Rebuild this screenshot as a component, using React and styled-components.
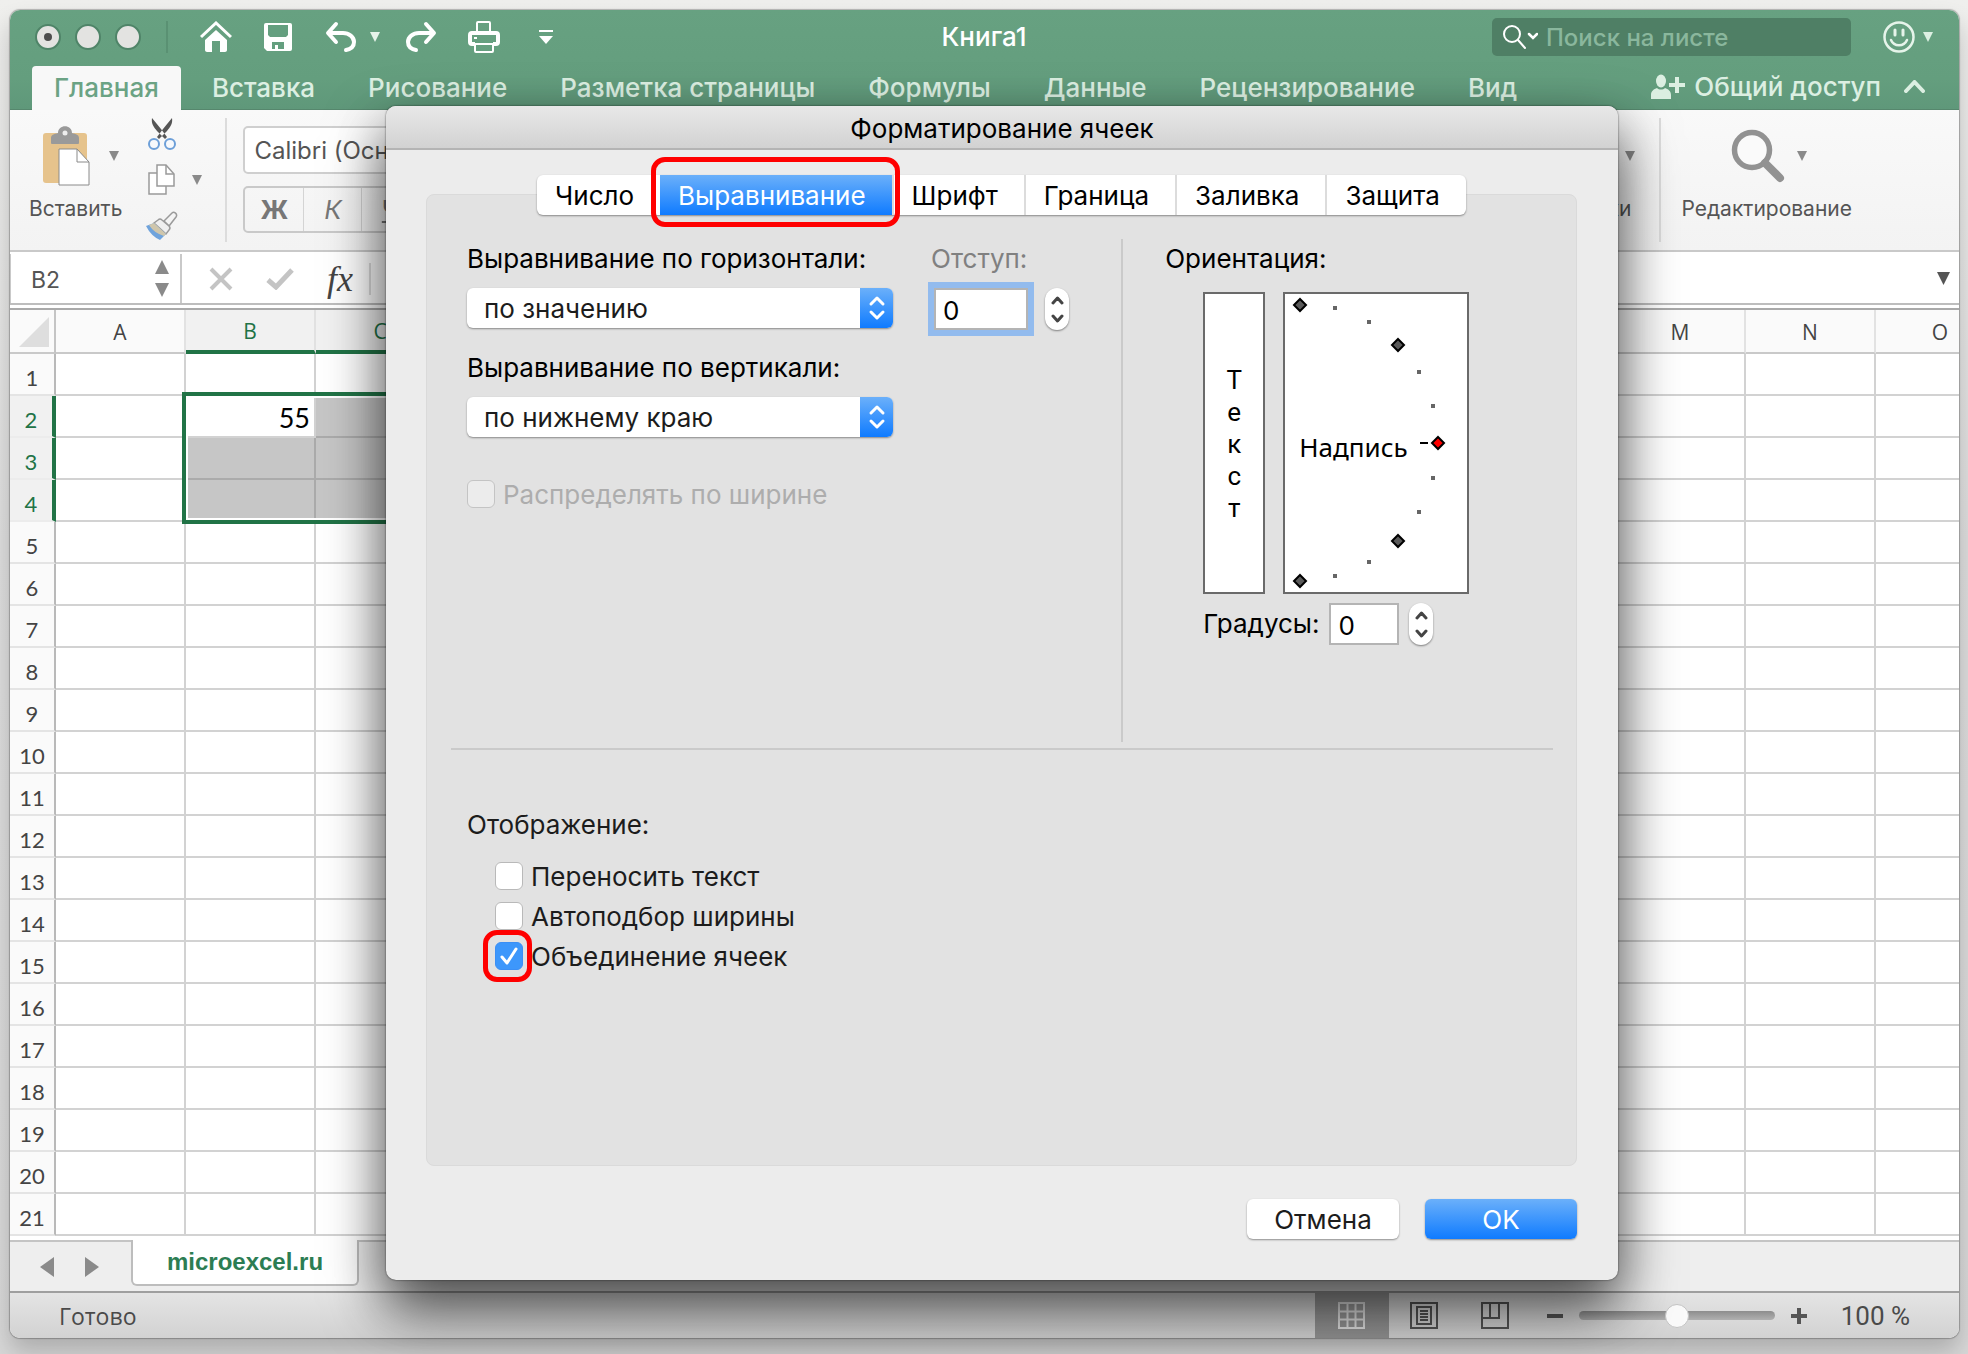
import React, { useState } from 'react';
import styled, { createGlobalStyle, css } from 'styled-components';

const GlobalStyle = createGlobalStyle`
  * {
    box-sizing: border-box;
  }

  body {
    margin: 0;
    background: #ececea;
    font-family: Inter, 'Noto Sans', sans-serif;
    font-size: 26px;
    color: #1c1c1c;
  }

  button, input, select {
    font: inherit;
    color: inherit;
    margin: 0;
  }

  button {
    border: 0;
    padding: 0;
    background: none;
  }

  svg {
    display: block;
    flex: none;
  }
`;

const Desktop = styled.div`
  display: flex;
  min-height: 100vh;
  padding: 10px 9px 16px 10px;
  background: linear-gradient(#efefed, #dedede 40%, #d8d8d8);
  overflow: hidden;
`;

const Window = styled.div`
  position: relative;
  flex: 1;
  min-width: 0;
  display: flex;
  flex-direction: column;
  border-radius: 10px;
  background: #fff;
  box-shadow: 0 0 1px 1px rgba(0, 0, 0, 0.25), 0 14px 24px rgba(0, 0, 0, 0.2);
`;

/* title bar and ribbon tabs */

const Header = styled.header`
  background: linear-gradient(#67a181, #649e7e 70%, #5f987a);
  border-bottom: 1px solid #56876d;
  border-radius: 10px 10px 0 0;
  color: #dcefe2;
  font-weight: 500;
`;

const TitleBar = styled.div`
  display: grid;
  grid-template-columns: 1fr auto 1fr;
  align-items: center;
  height: 54px;
  padding: 0 26px 0 25px;
`;

const TitleGroup = styled.div`
  display: flex;
  align-items: center;
  justify-content: ${(props) => (props.$end ? 'flex-end' : 'flex-start')};
  height: 52px;
`;

const Traffic = styled.button`
  width: 26px;
  height: 26px;
  margin-right: 14px;
  border: 2px solid #4f8468;
  border-radius: 50%;
  background: #e3e3e1;
  display: grid;
  place-items: center;

  &::after {
    content: '';
    width: 8px;
    height: 8px;
    border-radius: 50%;
    background: ${(props) => (props.$dirty ? '#4d4d4d' : 'transparent')};
  }
`;

const TitleDivider = styled.span`
  width: 2px;
  height: 32px;
  margin: 0 31px 0 11px;
  background: #5a9173;
`;

const QuickButton = styled.button`
  width: 34px;
  height: 34px;
  display: grid;
  place-items: center;
  color: #e6f4ea;
  margin-right: ${(props) => props.$gap || 0}px;
`;

const DocTitle = styled.h1`
  margin: 0;
  font-size: 26px;
  line-height: 32px;
  font-weight: 500;
  color: #fff;
`;

const SearchBox = styled.label`
  display: flex;
  align-items: center;
  gap: 8px;
  width: 359px;
  height: 38px;
  margin-right: 31px;
  padding-left: 10px;
  border-radius: 5px;
  background: #4f7f65;
  color: #fff;
  font-size: 24px;

  input {
    flex: 1;
    min-width: 0;
    border: 0;
    padding: 0;
    background: none;
    outline: 0;
  }

  input::placeholder {
    color: #8ab79d;
    opacity: 1;
  }
`;

const RibbonTabs = styled.nav`
  display: flex;
  align-items: stretch;
  gap: 9px;
  height: 45px;
  padding: 0 34px 0 22px;
`;

const RibbonTab = styled.button`
  margin-top: 2px;
  padding: 0 22px;
  border-radius: 4px 4px 0 0;
  line-height: 40px;
  ${(props) =>
    props.$active &&
    css`
      background: #f8f8f8;
      color: #6ba384;
      margin-bottom: -1px;
    `}
`;

const ShareButton = styled.button`
  display: flex;
  align-items: center;
  gap: 9px;
  margin-left: auto;
  margin-right: 14px;
`;

/* ribbon */

const Ribbon = styled.div`
  display: flex;
  height: 142px;
  padding: 8px 107px 8px 19px;
  border-bottom: 2px solid #c9c9c9;
  background: linear-gradient(#f9f9f9, #f3f3f3);
  color: #555;
  font-size: 21px;
`;

const Group = styled.div`
  display: flex;
  flex-direction: column;
  align-items: center;
  margin-right: ${(props) => props.$after || 0}px;
`;

const EditGroup = styled(Group)`
  margin-left: 20px;
`;

const GroupIcon = styled.div`
  display: flex;
  align-items: center;
  gap: ${(props) => props.$gap || 18}px;
  height: 76px;
  padding-left: ${(props) => props.$indent || 0}px;
  color: #8a8a8a;
`;

const GroupLabel = styled.span`
  line-height: 30px;
`;

const ClipColumn = styled.div`
  display: grid;
  grid-template-columns: 32px 14px;
  grid-template-rows: repeat(3, 46px);
  column-gap: 12px;
  align-items: center;
  justify-items: center;
  margin: -7px 21px 0 24px;
  color: #8a8a8a;
`;

const RibbonDivider = styled.span`
  width: 2px;
  height: 124px;
  background: #dcdcdc;
`;

const FontGroup = styled.div`
  flex: 1;
  margin-left: 16px;
  padding-top: 8px;
`;

const FontName = styled.input`
  display: block;
  width: 300px;
  height: 48px;
  padding: 0 9px;
  border: 2px solid #cfcfcf;
  border-radius: 5px;
  background: #fff;
  font-size: 24px;
`;

const StyleButtons = styled.div`
  display: inline-flex;
  margin-top: 12px;
  border: 2px solid #c9c9c9;
  border-radius: 5px;
`;

const StyleButton = styled.button`
  width: 58px;
  height: 43px;
  font-size: 26px;
  font-weight: ${(props) => (props.$bold ? 700 : 400)};
  font-style: ${(props) => (props.$italic ? 'italic' : 'normal')};
  text-decoration: ${(props) => (props.$underline ? 'underline' : 'none')};
  color: #777;
  border-left: ${(props) => (props.$bold ? 0 : '1px solid #d4d4d4')};
`;

/* formula bar */

const FormulaBar = styled.div`
  display: flex;
  align-items: center;
  height: 53px;
  padding: 2px 9px 0 0;
  border-bottom: 2px solid #bdbdbd;
  color: #555;
`;

const NameBox = styled.div`
  display: flex;
  align-items: center;
  width: 172px;
  height: 49px;
  padding: 0 11px 0 20px;
  border: 2px solid #c9c9c9;
  border-width: 0 2px 0 1px;

  input {
    flex: 1;
    min-width: 0;
    border: 0;
    padding: 3px 0 0;
    font-size: 23px;
    background: none;
  }
`;

const NameArrows = styled.span`
  display: grid;
  gap: 9px;
  color: #8a8a8a;
`;

const FormulaButton = styled.button`
  display: grid;
  place-items: center;
  width: 30px;
  margin-left: ${(props) => props.$gap}px;
  color: #c4c4c4;
`;

const FxButton = styled(FormulaButton)`
  font: italic 36px/40px 'Liberation Serif', serif;
  color: #444;
`;

const FormulaInput = styled.input`
  flex: 1;
  min-width: 0;
  height: 32px;
  margin-left: 14px;
  border: 0;
  border-left: 2px solid #dcdcdc;
  background: none;
`;

/* sheet */

const SheetArea = styled.div`
  flex: 1;
  min-height: 0;
  margin-top: 3px;
  border-top: 2px solid #a9a9a9;
  overflow: hidden;
`;

const Sheet = styled.table`
  table-layout: fixed;
  width: 1996px;
  border-collapse: separate;
  border-spacing: 0;
  font-family: Lato, 'Noto Sans', sans-serif;
`;

const ColHead = styled.th`
  width: ${(props) => props.$width}px;
  height: 44px;
  padding: 2px 0 0;
  border-right: 2px solid #e2e2e2;
  border-bottom: ${(props) => (props.$on ? '4px solid #217346' : '2px solid #c9c9c9')};
  background: ${(props) => (props.$on ? '#f1f1f1' : '#fafafa')};
  font-family: 'Open Sans', sans-serif;
  font-size: 21px;
  font-weight: 400;
  color: ${(props) => (props.$on ? '#217346' : '#444')};
`;

const Corner = styled(ColHead)`
  border-right-color: #c4c4c4;

  svg {
    margin-left: 9px;
  }
`;

const RowHead = styled.th`
  height: 42px;
  padding: 8px 0 0;
  border-right: ${(props) => (props.$on ? '4px solid #217346' : '2px solid #b9b9b9')};
  border-bottom: 2px solid ${(props) => (props.$on ? '#ececec' : '#e4e4e4')};
  background: ${(props) => (props.$on ? '#f1f1f1' : '#fafafa')};
  font-size: 22px;
  line-height: 24px;
  font-weight: 400;
  color: ${(props) => (props.$on ? '#217346' : '#444')};
`;

const Cell = styled.td`
  position: relative;
  height: 42px;
  padding: 4px 4px 0 0;
  border-right: 2px solid #d2d2d2;
  border-bottom: 2px solid #d2d2d2;
  text-align: right;
  font-size: 27px;
  line-height: 30px;
  color: #000;
  ${(props) =>
    props.$selected &&
    css`
      background: #c6c6c6;
      border-color: #ababab;
    `}
`;

const SelectionFrame = styled.span`
  position: absolute;
  z-index: 1;
  top: -4px;
  left: -4px;
  width: 396px;
  height: 132px;
  border: 4px solid #217346;
  box-shadow: inset 0 0 0 2px #fff;
  pointer-events: none;
`;

/* sheet tabs and status bar */

const SheetTabs = styled.div`
  display: flex;
  align-items: flex-start;
  height: 51px;
  border-top: 2px solid #c4c4c4;
  background: #eee;
`;

const SheetArrow = styled.button`
  margin: 14px 0 0 29px;
  width: 16px;
  color: #8a8a8a;
`;

const SheetTab = styled.button`
  margin: -2px 0 0 31px;
  width: 228px;
  height: 46px;
  border: 2px solid #bdbdbd;
  border-top: 0;
  border-radius: 0 0 6px 6px;
  background: #fff;
  font: bold 24px/40px 'Liberation Sans', sans-serif;
  color: #2c7d53;
`;

const StatusBar = styled.footer`
  display: flex;
  align-items: center;
  height: 47px;
  padding: 0 49px;
  border-top: 2px solid #9f9f9f;
  border-radius: 0 0 10px 10px;
  background: linear-gradient(#e4e4e4, #d2d2d2);
  font-family: 'Open Sans', 'Noto Sans', sans-serif;
  font-size: 23px;
  color: #4a4a4a;
`;

const StatusTools = styled.div`
  display: flex;
  align-items: center;
  margin-left: auto;
`;

const ViewButton = styled.button`
  display: grid;
  place-items: center;
  width: ${(props) => (props.$active ? 74 : 71)}px;
  height: 45px;
  color: ${(props) => (props.$active ? '#e4e4e4' : '#555')};
  background: ${(props) => (props.$active ? 'rgba(0, 0, 0, 0.3)' : 'none')};
`;

const ZoomButton = styled.button`
  width: 16px;
  margin: 0 16px;
`;

const ZoomSlider = styled.input`
  appearance: none;
  width: 196px;
  height: 9px;
  border-radius: 5px;
  background: linear-gradient(#8d8d8d, #b0b0b0);

  &::-webkit-slider-thumb {
    appearance: none;
    width: 24px;
    height: 24px;
    border: 1px solid #c4c4c4;
    border-radius: 50%;
    background: #fafafa;
  }
`;

const ZoomValue = styled.span`
  margin-left: 18px;
  font-family: Roboto, sans-serif;
  font-size: 26px;
`;

/* dialog */

const Dialog = styled.section`
  position: absolute;
  z-index: 2;
  top: 96px;
  left: 376px;
  right: 341px;
  bottom: 58px;
  display: flex;
  flex-direction: column;
  border-radius: 10px;
  background: #ececec;
  color: #000;
  box-shadow: 0 0 2px rgba(0, 0, 0, 0.7), 0 28px 60px rgba(0, 0, 0, 0.6), 0 24px 50px rgba(0, 0, 0, 0.25);
`;

const DialogTitle = styled.h2`
  margin: 0;
  height: 44px;
  border-bottom: 2px solid #b4b4b4;
  border-radius: 10px 10px 0 0;
  background: linear-gradient(#e8e8e8, #d2d2d2);
  font-size: 26px;
  line-height: 46px;
  font-weight: 400;
  text-align: center;
`;

const DialogBody = styled.div`
  flex: 1;
  display: flex;
  flex-direction: column;
  padding: 25px 41px 41px 40px;
`;

const TabBar = styled.div`
  position: relative;
  z-index: 1;
  display: flex;
  align-self: center;
  height: 40px;
  border-radius: 6px;
  background: #fff;
  box-shadow: 0 1px 2px rgba(0, 0, 0, 0.4);
`;

const Tab = styled.button`
  position: relative;
  padding: 0 26px 0 18px;
  border-left: 2px solid #dcdcdc;

  &:first-child {
    border-left: 0;
  }

  ${(props) =>
    props.$active &&
    css`
      border-left: 0;
      background: linear-gradient(#6bb0fa, #0f7bff);
      color: #fff;
    `}
`;

const Marker = styled.span`
  position: absolute;
  inset: ${(props) => props.$inset};
  border: 5px solid #f00;
  border-radius: 14px;
  pointer-events: none;
`;

const Panel = styled.div`
  flex: 1;
  margin-top: -21px;
  padding: 44px 23px 0 24px;
  border: 1px solid #dadada;
  border-radius: 8px;
  background: #e2e2e2;
`;

const Upper = styled.div`
  display: grid;
  grid-template-columns: 61fr 39fr;
  height: 511px;
  padding-bottom: 6px;
  border-bottom: 2px solid #cacaca;
`;

const AlignArea = styled.div`
  display: flex;
  gap: 38px;
  padding: 5px 0 0 16px;
  border-right: 2px solid #cacaca;
`;

const OrientArea = styled.div`
  padding: 5px 0 0 42px;
`;

const FieldLabel = styled.label`
  display: block;
  line-height: 30px;
  color: ${(props) => (props.$muted ? '#808080' : 'inherit')};
`;

const SelectBox = styled.div`
  display: flex;
  width: 426px;
  height: 40px;
  margin: 14px 0 25px;
  border-radius: 6px;
  background: #fff;
  box-shadow: 0 1px 2px rgba(0, 0, 0, 0.4);
  overflow: hidden;

  select {
    appearance: none;
    flex: 1;
    min-width: 0;
    border: 0;
    padding: 0 17px;
    background: none;
    color: #1c1c1c;
  }
`;

const SelectArrows = styled.span`
  display: grid;
  place-items: center;
  width: 33px;
  background: linear-gradient(#6bb0fa, #0f7bff);
  color: #fff;
`;

const CheckRow = styled.label`
  display: flex;
  align-items: center;
  gap: 8px;
  height: 40px;
  color: #1c1c1c;
`;

const DisabledCheckRow = styled(CheckRow)`
  margin-top: 37px;
  color: #adadad;
`;

const CheckWrap = styled.span`
  position: relative;
  display: grid;
  width: 28px;
  height: 28px;

  svg {
    position: absolute;
    inset: 0;
    pointer-events: none;
  }
`;

const Check = styled.input`
  appearance: none;
  width: 28px;
  height: 28px;
  border: 1px solid #b9b9b9;
  border-radius: 6px;
  background: #fff;

  &:checked {
    border-color: #3b8ff5;
    background: #3d97fb;
  }

  &:disabled {
    border-color: #c4c4c4;
    background: #ececec;
  }
`;

const IndentField = styled.div`
  display: flex;
  align-items: center;
  gap: 17px;
  padding: 14px 0 0 3px;
`;

const DegreesField = styled.div`
  display: flex;
  align-items: center;
  gap: 10px;
  margin-left: 38px;
`;

const NumberInput = styled.input`
  width: ${(props) => props.$width}px;
  height: 42px;
  padding: 3px 7px 0;
  border: 2px solid #b4b4b4;
  border-radius: 0;
  background: #fff;
  outline: ${(props) => (props.$focused ? '6px solid #92bbee' : 0)};
  color: #000;
`;

const Stepper = styled.span`
  display: grid;
  grid-template-rows: 1fr 1fr;
  width: 24px;
  height: 42px;
  padding: 3px 0;
  border-radius: 12px;
  background: #fff;
  box-shadow: 0 1px 2px rgba(0, 0, 0, 0.45);
  color: #444;

  button {
    display: grid;
    place-items: center;
  }
`;

const Orientation = styled.div`
  display: flex;
  gap: 18px;
  margin: 18px 0 9px 38px;
`;

const orientBox = css`
  height: 302px;
  border: 2px solid #6a6a6a;
  background: #fff;
  font-size: 26px;
`;

const VerticalText = styled.button`
  ${orientBox}
  display: flex;
  flex-direction: column;
  align-items: center;
  justify-content: center;
  width: 62px;
  padding-top: 2px;
  font-family: Roboto, sans-serif;
  line-height: 32px;
`;

const Dial = styled.div`
  ${orientBox}
  position: relative;
  display: flex;
  align-items: center;
  width: 186px;
  padding: 8px 0 0 14px;
  font-family: 'Noto Sans', sans-serif;

  svg {
    position: absolute;
    top: -2px;
    left: -2px;
  }
`;

const Lower = styled.div`
  padding: 60px 0 0 16px;
  color: #1c1c1c;
`;

const CheckList = styled.div`
  padding: 16px 0 0 28px;
`;

const DialogFooter = styled.div`
  display: flex;
  justify-content: flex-end;
  gap: 26px;
  padding-top: 33px;
`;

const DialogButton = styled.button`
  width: 152px;
  height: 40px;
  border-radius: 6px;
  background: ${(props) => (props.$primary ? 'linear-gradient(#6bb0fa, #0f7bff)' : '#fff')};
  color: ${(props) => (props.$primary ? '#fff' : '#1c1c1c')};
  box-shadow: 0 1px 2px rgba(0, 0, 0, 0.4);
`;

/* icons */

const Caret = ({ size = 10, up = false }) => (
  <svg width={size} height={size} viewBox="0 0 10 10" fill="currentColor">
    <path d={up ? 'M5 0l5 10H0z' : 'M0 0h10L5 10z'} />
  </svg>
);

const Chevron = ({ width, height, up = false, stroke = 3 }) => (
  <svg
    width={width}
    height={height}
    viewBox={`0 0 ${width} ${height}`}
    fill="none"
    stroke="currentColor"
    strokeWidth={stroke}
    strokeLinecap="round"
    strokeLinejoin="round"
  >
    <path
      d={
        up
          ? `M2 ${height - 2}L${width / 2} 2L${width - 2} ${height - 2}`
          : `M2 2L${width / 2} ${height - 2}L${width - 2} 2`
      }
    />
  </svg>
);

const DoubleChevron = () => (
  <svg width="20" height="26" viewBox="0 0 20 26" fill="none" stroke="currentColor" strokeWidth="3" strokeLinecap="round" strokeLinejoin="round">
    <path d="M4 9l6-6 6 6M4 17l6 6 6-6" />
  </svg>
);

const HomeIcon = () => (
  <svg width="32" height="32" viewBox="0 0 32 32">
    <path d="M1 16L16 2l15 14" fill="none" stroke="#fff" strokeWidth="3" />
    <path d="M5 19L16 9l11 10v10c0 1-1 2-2 2h-5V20h-8v11H7c-1 0-2-1-2-2z" fill="#fff" />
  </svg>
);

const SaveIcon = () => (
  <svg width="30" height="30" viewBox="0 0 30 30">
    <path d="M3 1h24q2 0 2 2v24q0 2-2 2H4l-3-3V3q0-2 2-2z" fill="#fff" />
    <path d="M5 3h20v10l-2 2H7l-2-2z" fill="#649f7f" />
    <path d="M9 20h12v7h-6v-4h-3v4H9z" fill="#649f7f" />
  </svg>
);

const UndoIcon = ({ flip = false }) => (
  <svg width="32" height="32" viewBox="0 0 32 32" fill="none" stroke="#fff" strokeWidth="4" strokeLinecap="round" strokeLinejoin="round">
    <g transform={flip ? 'matrix(-1 0 0 1 32 0)' : undefined}>
      <path d="M11 3L3 12l8 9M4 12h14c6 0 11 4 11 9 0 4-3 7-8 8" />
    </g>
  </svg>
);

const PrintIcon = () => (
  <svg width="34" height="34" viewBox="0 0 34 34" fill="none" stroke="#fff" strokeLinejoin="round">
    <path d="M10 12V3q0-1 1-1h11q1 0 1 1v9" strokeWidth="2" />
    <path d="M8 24H5q-2 0-2-2v-7q0-2 2-2h24q2 0 2 2v7q0 2-2 2h-3" strokeWidth="4" />
    <path d="M8 24h18v7q0 1-1 1H9q-1 0-1-1z" strokeWidth="2" />
    <path d="M7 18h3" strokeWidth="2" />
  </svg>
);

const CustomizeIcon = () => (
  <svg width="16" height="16" viewBox="0 0 16 16" fill="#fff">
    <path d="M1 1h14v2H1zM1 7h14l-7 8z" />
  </svg>
);

const SearchIcon = () => (
  <svg width="36" height="26" viewBox="0 0 36 26" fill="none" stroke="#fff" strokeWidth="2" strokeLinecap="round">
    <circle cx="10" cy="10" r="8" />
    <path d="M16 16l7 8" />
    <path d="M27 10l4 4 4-4" strokeWidth="2.5" />
  </svg>
);

const SmileIcon = () => (
  <svg width="34" height="34" viewBox="0 0 34 34" fill="none" stroke="#e6f4ea" strokeWidth="2.5" strokeLinecap="round">
    <circle cx="17" cy="17" r="14.5" />
    <path d="M13 10v5M21 10v5" strokeWidth="3" />
    <path d="M9 20c3 7 13 7 16 0" />
  </svg>
);

const ShareIcon = () => (
  <svg width="34" height="26" viewBox="0 0 34 26" fill="currentColor">
    <ellipse cx="10" cy="7" rx="5" ry="6.5" />
    <path d="M0 25v-4c0-4 3-6 6-7 2 2 6 2 8 0 3 1 6 3 6 7v4z" />
    <path d="M24 3h4v6h6v4h-6v6h-4v-6h-6V9h6z" />
  </svg>
);

const PasteIcon = () => (
  <svg width="48" height="60" viewBox="0 0 48 60">
    <rect x="0" y="7" width="44" height="50" rx="3" fill="#e6c38c" />
    <path d="M8 17v-5c0-3 3-4 7-5 0-9 14-9 14 0 4 1 7 2 7 5v5q0 1-1 1H9q-1 0-1-1z" fill="#9a9a9a" />
    <circle cx="22" cy="7" r="2.5" fill="#eee" />
    <path d="M16 23h18l12 13v23H16z" fill="#fff" stroke="#8a8a8a" />
    <path d="M34 23v13h12" fill="none" stroke="#8a8a8a" />
  </svg>
);

const CutIcon = () => (
  <svg width="30" height="34" viewBox="0 0 30 34" fill="none">
    <path d="M5 1c-1 6 2 9 5 13l8 8 2-2L14 12zM25 1c1 6-2 9-5 13l-8 8-2-2 6-8z" fill="#555" />
    <circle cx="7" cy="27" r="5" stroke="#6d9fd8" strokeWidth="2" fill="#f7f9fc" />
    <circle cx="23" cy="27" r="5" stroke="#6d9fd8" strokeWidth="2" fill="#f7f9fc" />
  </svg>
);

const CopyIcon = () => (
  <svg width="28" height="32" viewBox="0 0 28 32" fill="#fff" stroke="#9a9a9a" strokeWidth="1.5">
    <path d="M1 9h17v21H1z" />
    <path d="M9 1h9l8 9v12H9z" />
    <path d="M18 1v9h8" fill="none" />
  </svg>
);

const BrushIcon = () => (
  <svg width="34" height="30" viewBox="0 0 34 30">
    <path d="M19 10l8-8c2-2 6 1 4 4l-7 9z" fill="#f4f4f4" stroke="#9a9a9a" strokeWidth="1.5" />
    <path d="M13 9q2-2 4 0l7 6q2 2 0 4l-3 4L9 12z" fill="#efefef" stroke="#9a9a9a" strokeWidth="1.5" />
    <path d="M9 12l12 11-6 6Q6 25 1 15z" fill="#6fa3dc" />
    <path d="M9 12l12 11-2 2Q9 22 4 14z" fill="#cfc6ac" />
  </svg>
);

const CellsIcon = () => (
  <svg width="50" height="50" viewBox="0 0 50 50" fill="#fff" stroke="#9a9a9a" strokeWidth="2">
    <path d="M2 6h46v38H2zM2 18h46M2 31h46M17 6v38M33 6v38" />
  </svg>
);

const MagnifierIcon = () => (
  <svg width="54" height="54" viewBox="0 0 54 54" fill="none" stroke="#929292">
    <circle cx="21" cy="21" r="17.5" strokeWidth="5.5" fill="#fafafa" />
    <path d="M34 34l15 15" strokeWidth="8" strokeLinecap="round" />
  </svg>
);

const CancelIcon = () => (
  <svg width="24" height="24" viewBox="0 0 24 24" stroke="currentColor" strokeWidth="4">
    <path d="M2 2l20 20M22 2L2 22" />
  </svg>
);

const AcceptIcon = () => (
  <svg width="28" height="22" viewBox="0 0 28 22" fill="none" stroke="currentColor" strokeWidth="5">
    <path d="M2 12l8 7L26 2" />
  </svg>
);

const GridIcon = () => (
  <svg width="27" height="27" viewBox="0 0 27 27" fill="none" stroke="currentColor" strokeWidth="2">
    <path d="M1 1h25v25H1zM9.500 1v25M17.500 1v25M1 9.500h25M1 17.500h25" />
  </svg>
);

const PageIcon = () => (
  <svg width="28" height="27" viewBox="0 0 28 27" fill="none" stroke="currentColor" strokeWidth="2">
    <path d="M1 1h26v25H1zM7 5h14v17H7zM10 9h8M10 12h8M10 15h8M10 18h8" />
  </svg>
);

const BreakIcon = () => (
  <svg width="28" height="27" viewBox="0 0 28 27" fill="none" stroke="currentColor" strokeWidth="2">
    <path d="M1 1h26v25H1zM1 16h17V1M9 1v15" />
  </svg>
);

const DIAMONDS = [
  [17, 13],
  [115, 53],
  [155, 151, '#f00'],
  [115, 249],
  [17, 289],
];

const DOTS = [
  [52, 16],
  [86, 30],
  [136, 80],
  [150, 114],
  [150, 186],
  [136, 220],
  [86, 270],
  [52, 284],
];

const DialMarks = () => (
  <svg width="186" height="302" viewBox="0 0 186 302">
    {DOTS.map(([x, y]) => (
      <rect key={`${x}-${y}`} x={x - 2} y={y - 2} width="4" height="4" fill="#666" />
    ))}
    <path d="M137 151h8" stroke="#000" strokeWidth="2" />
    {DIAMONDS.map(([x, y, fill = '#5a5a5a']) => (
      <path key={`${x}-${y}`} d={`M${x} ${y - 6}l6 6-6 6-6-6z`} fill={fill} stroke="#000" strokeWidth="2" />
    ))}
  </svg>
);

const StepperControl = ({ onStep }) => (
  <Stepper>
    <button type="button" aria-label="+1" onClick={() => onStep(1)}>
      <Chevron width={13} height={9} up />
    </button>
    <button type="button" aria-label="-1" onClick={() => onStep(-1)}>
      <Chevron width={13} height={9} />
    </button>
  </Stepper>
);

const RIBBON_TABS = [
  'Главная',
  'Вставка',
  'Рисование',
  'Разметка страницы',
  'Формулы',
  'Данные',
  'Рецензирование',
  'Вид',
];
const COLUMNS = 'ABCDEFGHIJKLMNO'.split('');
const ROWS = Array.from({ length: 21 }, (_, i) => i + 1);
const DIALOG_TABS = ['Число', 'Выравнивание', 'Шрифт', 'Граница', 'Заливка', 'Защита'];
const SELECTED_COLUMNS = ['B', 'C', 'D'];
const SELECTED_ROWS = [2, 3, 4];

function Spreadsheet() {
  return (
    <SheetArea>
      <Sheet>
        <thead>
          <tr>
            <Corner $width={46}>
              <svg width="30" height="30" viewBox="0 0 30 30">
                <path d="M30 0v30H0z" fill="#dedede" />
              </svg>
            </Corner>
            {COLUMNS.map((col) => (
              <ColHead key={col} $width={130} $on={SELECTED_COLUMNS.includes(col)}>
                {col}
              </ColHead>
            ))}
          </tr>
        </thead>
        <tbody>
          {ROWS.map((row) => (
            <tr key={row}>
              <RowHead $on={SELECTED_ROWS.includes(row)}>{row}</RowHead>
              {COLUMNS.map((col) => {
                const active = col === 'B' && row === 2;
                const selected = SELECTED_COLUMNS.includes(col) && SELECTED_ROWS.includes(row);
                return (
                  <Cell key={col} $selected={selected && !active}>
                    {active && 55}
                    {active && <SelectionFrame />}
                  </Cell>
                );
              })}
            </tr>
          ))}
        </tbody>
      </Sheet>
    </SheetArea>
  );
}

function FormatDialog() {
  const [tab, setTab] = useState('Выравнивание');
  const [indent, setIndent] = useState(0);
  const [degrees, setDegrees] = useState(0);
  const [wrap, setWrap] = useState(false);
  const [shrink, setShrink] = useState(false);
  const [merge, setMerge] = useState(true);

  return (
    <Dialog role="dialog" aria-labelledby="dialog-title">
      <DialogTitle id="dialog-title">Форматирование ячеек</DialogTitle>
      <DialogBody>
        <TabBar role="tablist">
          {DIALOG_TABS.map((name) => (
            <Tab key={name} role="tab" aria-selected={tab === name} $active={tab === name} onClick={() => setTab(name)}>
              {name}
              {name === 'Выравнивание' && <Marker $inset="-18px -8px -12px -9px" />}
            </Tab>
          ))}
        </TabBar>

        <Panel>
          <Upper>
            <AlignArea>
              <div>
                <FieldLabel htmlFor="horizontal">Выравнивание по горизонтали:</FieldLabel>
                <SelectBox>
                  <select id="horizontal">
                    <option>по значению</option>
                  </select>
                  <SelectArrows>
                    <DoubleChevron />
                  </SelectArrows>
                </SelectBox>
                <FieldLabel htmlFor="vertical">Выравнивание по вертикали:</FieldLabel>
                <SelectBox>
                  <select id="vertical">
                    <option>по нижнему краю</option>
                  </select>
                  <SelectArrows>
                    <DoubleChevron />
                  </SelectArrows>
                </SelectBox>
                <DisabledCheckRow>
                  <CheckWrap>
                    <Check type="checkbox" disabled />
                  </CheckWrap>
                  Распределять по ширине
                </DisabledCheckRow>
              </div>
              <div>
                <FieldLabel $muted htmlFor="indent">
                  Отступ:
                </FieldLabel>
                <IndentField>
                  <NumberInput
                    id="indent"
                    $width={94}
                    $focused
                    value={indent}
                    onChange={(e) => setIndent(Number(e.target.value) || 0)}
                  />
                  <StepperControl onStep={(n) => setIndent(Math.max(0, indent + n))} />
                </IndentField>
              </div>
            </AlignArea>

            <OrientArea>
              <FieldLabel as="div">Ориентация:</FieldLabel>
              <Orientation>
                <VerticalText type="button">
                  {'Текст'.split('').map((letter, i) => (
                    <span key={i}>{letter}</span>
                  ))}
                </VerticalText>
                <Dial>
                  Надпись
                  <DialMarks />
                </Dial>
              </Orientation>
              <DegreesField>
                <FieldLabel htmlFor="degrees">Градусы:</FieldLabel>
                <NumberInput
                  id="degrees"
                  $width={70}
                  value={degrees}
                  onChange={(e) => setDegrees(Number(e.target.value) || 0)}
                />
                <StepperControl onStep={(n) => setDegrees(degrees + n)} />
              </DegreesField>
            </OrientArea>
          </Upper>

          <Lower>
            <FieldLabel as="div">Отображение:</FieldLabel>
            <CheckList>
              <CheckRow>
                <CheckWrap>
                  <Check type="checkbox" checked={wrap} onChange={() => setWrap(!wrap)} />
                </CheckWrap>
                Переносить текст
              </CheckRow>
              <CheckRow>
                <CheckWrap>
                  <Check type="checkbox" checked={shrink} onChange={() => setShrink(!shrink)} />
                </CheckWrap>
                Автоподбор ширины
              </CheckRow>
              <CheckRow>
                <CheckWrap>
                  <Check type="checkbox" checked={merge} onChange={() => setMerge(!merge)} />
                  {merge && (
                    <svg width="28" height="28" viewBox="0 0 28 28" fill="none" stroke="#fff" strokeWidth="3" strokeLinecap="round" strokeLinejoin="round">
                      <path d="M7 15l5 6 9-14" />
                    </svg>
                  )}
                  <Marker $inset="-12px -9px -12px -12px" />
                </CheckWrap>
                Объединение ячеек
              </CheckRow>
            </CheckList>
          </Lower>
        </Panel>

        <DialogFooter>
          <DialogButton>Отмена</DialogButton>
          <DialogButton $primary>OK</DialogButton>
        </DialogFooter>
      </DialogBody>
    </Dialog>
  );
}

function App() {
  const [ribbonTab, setRibbonTab] = useState('Главная');

  return (
    <>
      <GlobalStyle />
      <Desktop>
        <Window>
          <Header>
            <TitleBar>
              <TitleGroup>
                <Traffic $dirty aria-label="Закрыть" />
                <Traffic aria-label="Свернуть" />
                <Traffic aria-label="Развернуть" />
                <TitleDivider />
                <QuickButton $gap={28} aria-label="Домой">
                  <HomeIcon />
                </QuickButton>
                <QuickButton $gap={29} aria-label="Сохранить">
                  <SaveIcon />
                </QuickButton>
                <QuickButton aria-label="Отменить">
                  <UndoIcon />
                </QuickButton>
                <QuickButton $gap={12} aria-label="Список отмены">
                  <Caret />
                </QuickButton>
                <QuickButton $gap={29} aria-label="Повторить">
                  <UndoIcon flip />
                </QuickButton>
                <QuickButton $gap={28} aria-label="Печать">
                  <PrintIcon />
                </QuickButton>
                <QuickButton aria-label="Настройка">
                  <CustomizeIcon />
                </QuickButton>
              </TitleGroup>
              <DocTitle>Книга1</DocTitle>
              <TitleGroup $end>
                <SearchBox>
                  <SearchIcon />
                  <input type="text" placeholder="Поиск на листе" aria-label="Поиск на листе" />
                </SearchBox>
                <QuickButton aria-label="Отзыв" $gap={7}>
                  <SmileIcon />
                </QuickButton>
                <Caret />
              </TitleGroup>
            </TitleBar>
            <RibbonTabs>
              {RIBBON_TABS.map((name) => (
                <RibbonTab key={name} $active={ribbonTab === name} onClick={() => setRibbonTab(name)}>
                  {name}
                </RibbonTab>
              ))}
              <ShareButton>
                <ShareIcon />
                Общий доступ
              </ShareButton>
              <button aria-label="Свернуть ленту">
                <Chevron width={21} height={13} up stroke={4} />
              </button>
            </RibbonTabs>
          </Header>

          <Ribbon>
            <Group>
              <GroupIcon $indent={10}>
                <PasteIcon />
                <Caret />
              </GroupIcon>
              <GroupLabel>Вставить</GroupLabel>
            </Group>
            <ClipColumn>
              <CutIcon />
              <span />
              <CopyIcon />
              <Caret />
              <BrushIcon />
            </ClipColumn>
            <RibbonDivider />
            <FontGroup>
              <FontName defaultValue="Calibri (Основной текст)" aria-label="Шрифт" />
              <StyleButtons>
                <StyleButton $bold>Ж</StyleButton>
                <StyleButton $italic>К</StyleButton>
                <StyleButton $underline>Ч</StyleButton>
              </StyleButtons>
            </FontGroup>
            <Group $after={24}>
              <GroupIcon $indent={4}>
                <CellsIcon />
                <Caret />
              </GroupIcon>
              <GroupLabel>Ячейки</GroupLabel>
            </Group>
            <RibbonDivider />
            <EditGroup>
              <GroupIcon $indent={4} $gap={12}>
                <MagnifierIcon />
                <Caret />
              </GroupIcon>
              <GroupLabel>Редактирование</GroupLabel>
            </EditGroup>
          </Ribbon>

          <FormulaBar>
            <NameBox>
              <input defaultValue="B2" aria-label="Имя ячейки" />
              <NameArrows>
                <Caret size={14} up />
                <Caret size={14} />
              </NameArrows>
            </NameBox>
            <FormulaButton $gap={24} aria-label="Отмена ввода">
              <CancelIcon />
            </FormulaButton>
            <FormulaButton $gap={29} aria-label="Ввод">
              <AcceptIcon />
            </FormulaButton>
            <FxButton $gap={30}>fx</FxButton>
            <FormulaInput aria-label="Строка формул" />
            <Caret size={13} />
          </FormulaBar>

          <Spreadsheet />

          <SheetTabs>
            <SheetArrow aria-label="Предыдущий лист">
              <svg width="16" height="22" viewBox="0 0 16 22" fill="currentColor">
                <path d="M15 1v20L1 11z" />
              </svg>
            </SheetArrow>
            <SheetArrow aria-label="Следующий лист">
              <svg width="16" height="22" viewBox="0 0 16 22" fill="currentColor">
                <path d="M1 1v20l14-10z" />
              </svg>
            </SheetArrow>
            <SheetTab>microexcel.ru</SheetTab>
          </SheetTabs>

          <StatusBar>
            Готово
            <StatusTools>
              <ViewButton $active aria-label="Обычный">
                <GridIcon />
              </ViewButton>
              <ViewButton aria-label="Разметка">
                <PageIcon />
              </ViewButton>
              <ViewButton aria-label="Страничный">
                <BreakIcon />
              </ViewButton>
              <ZoomButton aria-label="Уменьшить">
                <svg width="16" height="16" viewBox="0 0 16 16">
                  <path d="M0 6h16v4H0z" fill="#555" />
                </svg>
              </ZoomButton>
              <ZoomSlider type="range" defaultValue="50" aria-label="Масштаб" />
              <ZoomButton aria-label="Увеличить">
                <svg width="16" height="16" viewBox="0 0 16 16">
                  <path d="M0 6h6V0h4v6h6v4h-6v6H6v-6H0z" fill="#555" />
                </svg>
              </ZoomButton>
              <ZoomValue>100 %</ZoomValue>
            </StatusTools>
          </StatusBar>

          <FormatDialog />
        </Window>
      </Desktop>
    </>
  );
}

export default App;
